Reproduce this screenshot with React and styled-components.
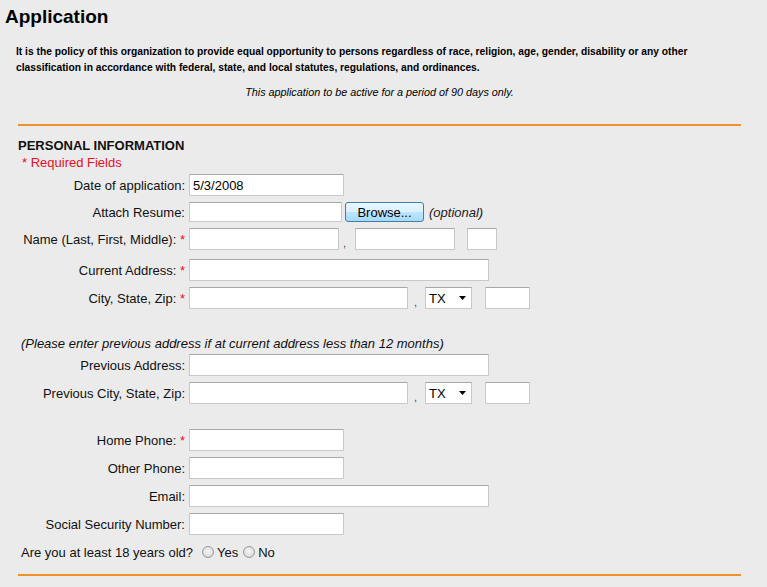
import React from 'react';
import styled, { createGlobalStyle } from 'styled-components';

const Global = createGlobalStyle`
  html, body {
    margin: 0;
    padding: 0;
    background: #ebebeb;
  }
  body {
    font-family: "Liberation Sans", Arial, sans-serif;
    color: #000;
  }
`;

const Page = styled.div`
  width: 767px;
  min-height: 587px;
  box-sizing: border-box;
  padding-top: 6px;
`;

const Title = styled.h1`
  margin: 0 0 0 5px;
  font-size: 19px;
  line-height: 22px;
  font-weight: bold;
`;

const Policy = styled.p`
  margin: 16px 0 0 16px;
  width: 700px;
  font-size: 10.25px;
  font-weight: bold;
  line-height: 16px;
`;

const Notice = styled.p`
  margin: 8px 0 0 18px;
  width: 723px;
  text-align: center;
  font-size: 10.8px;
  font-style: italic;
  line-height: 16px;
`;

const Section = styled.section`
  margin: 24px 0 0 18px;
  width: 723px;
  border-top: 2px solid #f0922a;
  border-bottom: 2px solid #f0922a;
  padding: 12px 0 8px;
  font-size: 13px;
`;

const Heading = styled.h2`
  margin: 0;
  font-size: 13px;
  line-height: 15px;
  font-weight: bold;
  color: #111;
`;

const Required = styled.div`
  margin-top: 2px;
  padding-left: 4px;
  line-height: 15px;
  color: #e3101e;
`;

const Row = styled.div`
  display: flex;
  align-items: center;
  height: ${({ $h }) => $h || 28}px;
  margin-top: ${({ $mt }) => $mt || 0}px;
  padding-left: ${({ $pl }) => $pl || 0}px;
  white-space: nowrap;
`;

const Label = styled.label`
  flex: 0 0 167px;
  text-align: right;
  color: #111;
`;

const Star = styled.span`
  color: #e3101e;
`;

const Field = styled.input`
  box-sizing: border-box;
  width: ${({ $w }) => $w}px;
  height: ${({ $ht }) => $ht || 22}px;
  margin: 0 0 0 ${({ $ml }) => ($ml === undefined ? 4 : $ml)}px;
  padding: 0 3px;
  border: 1px solid #c9c9c9;
  border-top-color: #a8a8a8;
  border-radius: 1px;
  background: #fff;
  font-family: "Liberation Sans", Arial, sans-serif;
  font-size: 13px;
  color: #000;
  outline: none;
`;

const Sep = styled.span`
  align-self: center;
  padding: 0 ${({ $r }) => $r}px 0 ${({ $l }) => $l}px;
  position: relative;
  top: 4px;
  font-size: 11px;
  color: #444;
`;

const Browse = styled.button`
  box-sizing: border-box;
  width: 79px;
  height: 20px;
  margin-left: 3px;
  padding: 0;
  border: 1px solid #3c7fb1;
  border-radius: 3px;
  background: linear-gradient(#eaf6fd 0%, #d9f0fc 50%, #bee6fd 51%, #a7d9f5 100%);
  font-family: "Liberation Sans", Arial, sans-serif;
  font-size: 13px;
  color: #000;
`;

const Hint = styled.span`
  margin-left: 5px;
  font-style: italic;
  color: #222;
`;

const SelectBox = styled.div`
  box-sizing: border-box;
  display: flex;
  align-items: center;
  justify-content: space-between;
  width: 47px;
  height: 22px;
  padding: 0 5px 0 3px;
  border: 1px solid #c9c9c9;
  border-top-color: #a8a8a8;
  background: #fff;
  color: #000;
`;

const Note = styled.div`
  font-style: italic;
  color: #111;
`;

const Question = styled.span`
  color: #111;
  margin-right: 9px;
`;

const Radio = styled.span`
  box-sizing: border-box;
  display: inline-block;
  width: 12px;
  height: 12px;
  border-radius: 50%;
  border: 1px solid #9a9a9a;
  background: radial-gradient(circle at 50% 40%, #f6f6f6 0%, #dcdcdc 70%, #cfcfcf 100%);
  margin-right: 3px;
`;

const Choice = styled.span`
  color: #111;
  margin-right: 5px;
`;

const Arrow = () => (
  <svg width="7" height="4" viewBox="0 0 7 4">
    <path d="M0 0 H7 L3.5 4 Z" fill="#000" />
  </svg>
);

const Select = ({ value }) => (
  <SelectBox>
    <span>{value}</span>
    <Arrow />
  </SelectBox>
);

export default function App() {
  return (
    <Page>
      <Global />
      <Title>Application</Title>
      <Policy>
        It is the policy of this organization to provide equal opportunity to persons regardless of race, religion, age,
        gender, disability or any other classification in accordance with federal, state, and local statutes,
        regulations, and ordinances.
      </Policy>
      <Notice>This application to be active for a period of 90 days only.</Notice>

      <Section>
        <Heading>PERSONAL INFORMATION</Heading>
        <Required>* Required Fields</Required>

        <Row $mt={1}>
          <Label>Date of application:</Label>
          <Field $w={155} defaultValue="5/3/2008" />
        </Row>
        <Row $mt={-1}>
          <Label>Attach Resume:</Label>
          <Field $w={153} $ht={20} />
          <Browse>Browse...</Browse>
          <Hint>(optional)</Hint>
        </Row>
        <Row $mt={-1}>
          <Label>
            Name (Last, First, Middle): <Star>*</Star>
          </Label>
          <Field $w={150} />
          <Sep $l={4} $r={9}>,</Sep>
          <Field $w={100} $ml={0} />
          <Field $w={30} $ml={12} />
        </Row>
        <Row $mt={3}>
          <Label>
            Current Address: <Star>*</Star>
          </Label>
          <Field $w={300} />
        </Row>
        <Row>
          <Label>
            City, State, Zip: <Star>*</Star>
          </Label>
          <Field $w={219} />
          <Sep $l={6} $r={8}>,</Sep>
          <Select value="TX" />
          <Field $w={45} $ml={13} />
        </Row>

        <Row $h={16} $mt={23} $pl={3}>
          <Note>(Please enter previous address if at current address less than 12 months)</Note>
        </Row>
        <Row>
          <Label>Previous Address:</Label>
          <Field $w={300} />
        </Row>
        <Row>
          <Label>Previous City, State, Zip:</Label>
          <Field $w={219} />
          <Sep $l={6} $r={8}>,</Sep>
          <Select value="TX" />
          <Field $w={45} $ml={13} />
        </Row>

        <Row $mt={19}>
          <Label>
            Home Phone: <Star>*</Star>
          </Label>
          <Field $w={155} />
        </Row>
        <Row>
          <Label>Other Phone:</Label>
          <Field $w={155} />
        </Row>
        <Row>
          <Label>Email:</Label>
          <Field $w={300} />
        </Row>
        <Row>
          <Label>Social Security Number:</Label>
          <Field $w={155} />
        </Row>
        <Row $pl={3}>
          <Question>Are you at least 18 years old?</Question>
          <Radio />
          <Choice>Yes</Choice>
          <Radio />
          <Choice>No</Choice>
        </Row>
      </Section>
    </Page>
  );
}
